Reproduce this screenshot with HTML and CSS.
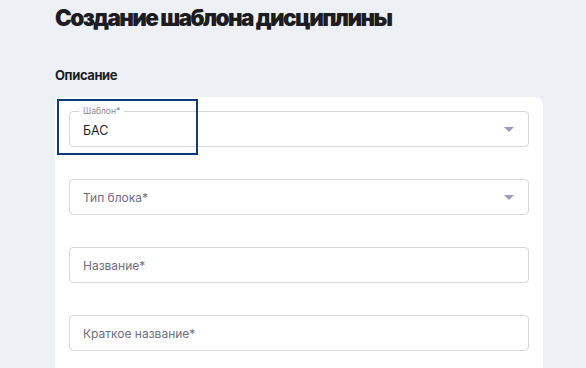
FILE: index.html
```html
<!DOCTYPE html>
<html lang="ru">
<head>
    <meta charset="UTF-8">
    <title>Создание шаблона дисциплины</title>
    <link rel="stylesheet" href="styles.css">
</head>
<body>

<div class="page">
    <h1 class="page__title">Создание шаблона дисциплины</h1>
    <h2 class="page__section">Описание</h2>

    <div class="card">
        <div class="field field--filled field--select">
            <span class="field__legend">Шаблон*</span>
            <span class="field__value">БАС</span>
            <span class="field__arrow"></span>
            <div class="field__mark"></div>
        </div>
        <div class="field field--select">
            <span class="field__placeholder">Тип блока*</span>
            <span class="field__arrow"></span>
        </div>
        <div class="field">
            <span class="field__placeholder">Название*</span>
        </div>
        <div class="field">
            <span class="field__placeholder">Краткое название*</span>
        </div>
    </div>
</div>

</body>
</html>
```

FILE: styles.css
```css
* {
    box-sizing: border-box;
    margin: 0;
    padding: 0;
}

body {
    background: #edf1f5;
    font-family: Inter, "Noto Sans", sans-serif;
    color: #1c1c22;
    overflow: hidden;
}

.page {
    padding: 3px 43px 0 55px;
}

.page__title {
    font-size: 22.5px;
    font-weight: 900;
    letter-spacing: -1.6px;
    line-height: 30px;
}

.page__section {
    font-size: 13px;
    font-weight: 700;
    letter-spacing: -0.4px;
    line-height: 18px;
    margin-top: 33px;
}

.card {
    background: #fff;
    border-radius: 8px;
    margin-top: 13px;
    padding: 14px 14px 40px;
    display: flex;
    flex-direction: column;
    gap: 32px;
}

.field {
    position: relative;
    height: 36px;
    border: 1px solid #d3d6da;
    border-radius: 4px;
    display: flex;
    align-items: center;
    padding: 0 13px;
    font-size: 12px;
}

.field__placeholder {
    color: #6f6c7e;
}

.field__value {
    color: #1c1c22;
    font-size: 12.5px;
    margin-top: 2px;
}

.field__legend {
    position: absolute;
    top: -6px;
    left: 9px;
    padding: 0 4px;
    background: #fff;
    color: #8a8896;
    font-size: 8.5px;
    line-height: 10px;
}

.field__arrow {
    position: absolute;
    right: 14px;
    top: 50%;
    margin-top: -2px;
    border-left: 5px solid transparent;
    border-right: 5px solid transparent;
    border-top: 5px solid #9a98bd;
}

.field__mark {
    position: absolute;
    left: -13px;
    top: -13px;
    width: 141px;
    height: 56px;
    border: 2px solid #0c3a7a;
}
```
